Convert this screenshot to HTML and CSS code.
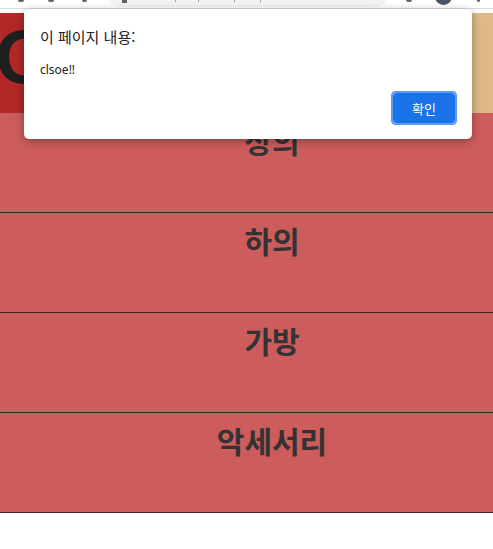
FILE: index.html
```html
<!DOCTYPE html>
<html lang="ko">
<head>
<meta charset="utf-8">
<title>shop</title>
<link rel="stylesheet" href="styles.css">
</head>
<body>
<div class="chrome">
  <span class="cicon ci1"></span>
  <span class="cicon ci2"></span>
  <span class="cicon ci3"></span>
  <div class="omnibox">
    <span class="lock"></span>
    <span class="urlmark"></span>
    <span class="urlmark"></span>
    <span class="urlmark"></span>
    <span class="urlmark"></span>
  </div>
  <span class="cicon ci4"></span>
  <span class="avatar"></span>
  <span class="cicon ci5"></span>
</div>
<div class="page">
  <header class="header">
    <div class="logo-side"><h1 class="logo">O</h1></div>
    <div class="nav-side"></div>
  </header>
  <main class="menu">
    <section class="item"><h2>상의</h2></section>
    <section class="item"><h2>하의</h2></section>
    <section class="item"><h2>가방</h2></section>
    <section class="item"><h2>악세서리</h2></section>
  </main>
</div>
<div class="alert">
  <div class="alert-title">이 페이지 내용:</div>
  <div class="alert-msg">clsoe!!</div>
  <div class="alert-actions"><button class="ok">확인</button></div>
</div>
</body>
</html>
```
FILE: styles.css
```css
html, body {
  margin: 0;
  padding: 0;
  background: #ffffff;
  font-family: "Noto Sans CJK KR", "Noto Sans", sans-serif;
}
.chrome {
  height: 8px;
  border-bottom: 1px solid #dadce0;
  background: #ffffff;
  display: flex;
  align-items: flex-end;
  position: relative;
  overflow: hidden;
}
.cicon {
  position: absolute;
  top: -3px;
  width: 6px;
  height: 5px;
  background: #5f6368;
  border-radius: 2px;
}
.ci1 { left: 18px; }
.ci2 { left: 48px; }
.ci3 { left: 82px; width: 5px; }
.ci4 { left: 406px; }
.ci5 { left: 477px; width: 3px; }
.avatar {
  position: absolute;
  left: 435px;
  top: -12px;
  width: 17px;
  height: 17px;
  border-radius: 50%;
  background: #4a5568;
}
.omnibox {
  position: absolute;
  left: 107px;
  top: -20px;
  width: 281px;
  height: 27px;
  background: #f1f3f4;
  border-radius: 14px;
}
.lock {
  position: absolute;
  left: 15px;
  bottom: 4px;
  width: 5px;
  height: 3px;
  background: #5f6368;
}
.urlmark {
  position: absolute;
  bottom: 5px;
  width: 1px;
  height: 3px;
  background: #9aa0a6;
}
.urlmark:nth-child(2) { left: 68px; }
.urlmark:nth-child(3) { left: 91px; }
.urlmark:nth-child(4) { left: 127px; }
.urlmark:nth-child(5) { left: 153px; }

.page {
  padding-top: 4px;
}
.header {
  display: flex;
  height: 100px;
}
.logo-side {
  flex: 1;
  background: #b22828;
  overflow: hidden;
}
.nav-side {
  flex: 1;
  background: #deb887;
}
.logo {
  margin: 0 0 0 -5px;
  padding-top: 4px;
  font-family: "Liberation Sans", Arial, sans-serif;
  font-weight: bold;
  font-size: 76px;
  line-height: 80px;
  color: #1f1f1f;
}
.menu {
  display: flex;
  flex-direction: column;
}
.item {
  height: 99px;
  background: #cd5c5c;
  border-bottom: 1px solid #3d2626;
  padding-left: 51px;
  box-sizing: content-box;
}
.item h2 {
  margin: 0;
  padding-top: 9px;
  text-align: center;
  font-family: "Noto Sans CJK KR", sans-serif;
  font-weight: bold;
  font-size: 30px;
  line-height: 36px;
  color: #333333;
}

.alert {
  position: absolute;
  left: 24px;
  top: 9px;
  width: 448px;
  height: 130px;
  box-sizing: border-box;
  background: #ffffff;
  border-radius: 5px;
  box-shadow: 0 2px 8px rgba(0, 0, 0, 0.35);
  padding: 16px 16px 0 16px;
  display: flex;
  flex-direction: column;
}
.alert-title {
  font-size: 15px;
  line-height: 24px;
  color: #202124;
}
.alert-msg {
  margin-top: 13px;
  font-family: "Noto Sans", sans-serif;
  font-size: 12px;
  line-height: 16px;
  color: #202124;
}
.alert-actions {
  display: flex;
  justify-content: flex-end;
  margin-top: 14px;
}
.ok {
  width: 64px;
  height: 32px;
  margin-right: 0;
  background: #1a73e8;
  color: #ffffff;
  border: 1px solid #ffffff;
  outline: 2px solid #5b9cf0;
  outline-offset: -1px;
  border-radius: 4px;
  font-family: "Noto Sans CJK KR", sans-serif;
  font-size: 13px;
  padding: 0;
  box-shadow: 0 0 0 1px #1a73e8;
}
```
